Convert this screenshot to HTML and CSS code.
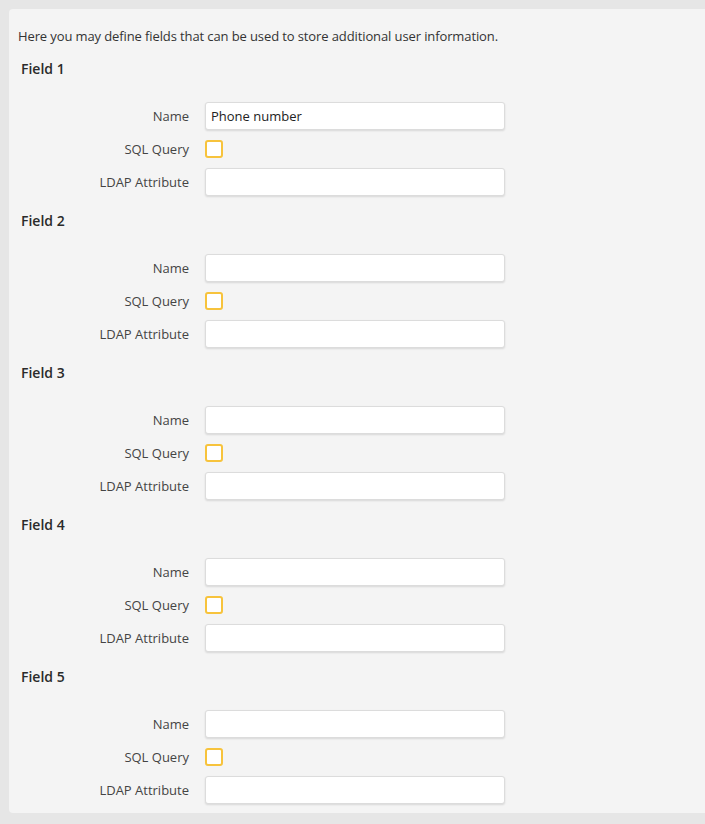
FILE: index.html
```html
<!DOCTYPE html>
<html>
<head>
<meta charset="utf-8">
<link rel="stylesheet" href="styles.css">
</head>
<body>
<div class="panel">
  <p class="intro">Here you may define fields that can be used to store additional user information.</p>

  <section class="field">
    <h3 class="field-title">Field 1</h3>
    <div class="rows">
      <label class="lbl">Name</label><input class="txt" type="text" value="Phone number">
      <label class="lbl">SQL Query</label><span class="chk"></span>
      <label class="lbl">LDAP Attribute</label><input class="txt" type="text">
    </div>
  </section>

  <section class="field">
    <h3 class="field-title">Field 2</h3>
    <div class="rows">
      <label class="lbl">Name</label><input class="txt" type="text">
      <label class="lbl">SQL Query</label><span class="chk"></span>
      <label class="lbl">LDAP Attribute</label><input class="txt" type="text">
    </div>
  </section>

  <section class="field">
    <h3 class="field-title">Field 3</h3>
    <div class="rows">
      <label class="lbl">Name</label><input class="txt" type="text">
      <label class="lbl">SQL Query</label><span class="chk"></span>
      <label class="lbl">LDAP Attribute</label><input class="txt" type="text">
    </div>
  </section>

  <section class="field">
    <h3 class="field-title">Field 4</h3>
    <div class="rows">
      <label class="lbl">Name</label><input class="txt" type="text">
      <label class="lbl">SQL Query</label><span class="chk"></span>
      <label class="lbl">LDAP Attribute</label><input class="txt" type="text">
    </div>
  </section>

  <section class="field">
    <h3 class="field-title">Field 5</h3>
    <div class="rows">
      <label class="lbl">Name</label><input class="txt" type="text">
      <label class="lbl">SQL Query</label><span class="chk"></span>
      <label class="lbl">LDAP Attribute</label><input class="txt" type="text">
    </div>
  </section>
</div>
</body>
</html>
```
FILE: styles.css
```css
html, body {
  margin: 0;
  padding: 0;
  background: #e6e6e6;
  font-family: "Open Sans", "Noto Sans", sans-serif;
  color: #333;
}

.panel {
  margin: 9px 0 0 9px;
  background: #f4f4f4;
  border-radius: 4px 0 0 4px;
  padding: 18px 0 6px 0;
  height: 780px;
  box-sizing: content-box;
}

.intro {
  margin: 0 0 14px 9px;
  font-size: 13px;
  line-height: 18px;
  letter-spacing: -0.11px;
  color: #333;
}

.field {
  margin: 0;
}

.field-title {
  margin: 0 0 20px 12px;
  font-size: 14px;
  line-height: 20px;
  font-weight: 600;
  color: #2a2a2a;
}

.rows {
  display: grid;
  grid-template-columns: 180px 300px;
  grid-auto-rows: 33px;
  column-gap: 16px;
  align-items: center;
  margin-bottom: 13px;
}

.lbl {
  text-align: right;
  font-size: 13px;
  color: #444;
}

.txt {
  box-sizing: border-box;
  width: 300px;
  height: 28px;
  margin: 0;
  padding: 0 5px;
  border: 1px solid #dcdcdc;
  border-radius: 3px;
  background: #fff;
  box-shadow: 0 1px 2px rgba(0, 0, 0, 0.12);
  font-family: "Open Sans", "Noto Sans", sans-serif;
  font-size: 13px;
  color: #222;
  outline: none;
}

.chk {
  box-sizing: border-box;
  display: block;
  width: 18px;
  height: 18px;
  border: 2px solid #f7c33c;
  border-radius: 3px;
  background: #fff;
}
```
